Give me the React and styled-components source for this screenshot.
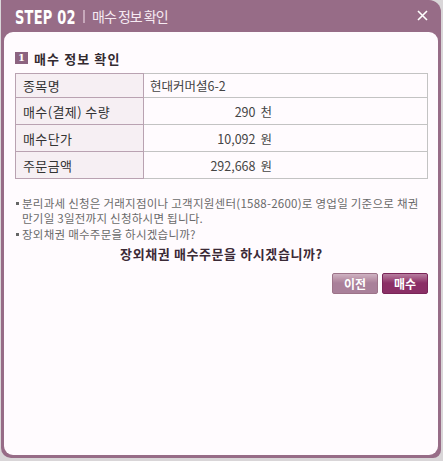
import React from 'react'
import styled, { createGlobalStyle } from 'styled-components'

const GlobalStyle = createGlobalStyle`
    html, body {
        margin: 0;
        padding: 0;
        background: #d9d6d8;
    }
    body {
        font-family: "Liberation Sans", "Noto Sans CJK KR", sans-serif;
        font-size: 12px;
    }
`;

const rows = [
    { label: '종목명', value: '현대커머셜6-2', height: 24 },
    { label: '매수(결제) 수량', value: '290', unit: '천', height: 27 },
    { label: '매수단가', value: '10,092', unit: '원', height: 27 },
    { label: '주문금액', value: '292,668', unit: '원', height: 27 },
]

function App() {
    return (
        <>
            <GlobalStyle />
            <Page>
                <Window>
                    <TitleBar>
                        <Step>STEP 02</Step>
                        <Divider />
                        <Title>매수 정보 확인</Title>
                        <Close aria-label="닫기">
                            <svg width="11" height="11" viewBox="0 0 11 11">
                                <path d="M1 1 L10 10 M10 1 L1 10" stroke="#fff" strokeWidth="1.6" />
                            </svg>
                        </Close>
                    </TitleBar>
                    <Body>
                        <SectionTitle>
                            <NumBadge>1</NumBadge>
                            매수 정보 확인
                        </SectionTitle>
                        <InfoTable>
                            <tbody>
                                {rows.map(row => (
                                    <tr key={row.label} style={{ height: row.height }}>
                                        <Th>{row.label}</Th>
                                        <Td>
                                            {row.unit ? (
                                                <Amount>
                                                    {row.value}<Unit>{row.unit}</Unit>
                                                </Amount>
                                            ) : row.value}
                                        </Td>
                                    </tr>
                                ))}
                            </tbody>
                        </InfoTable>
                        <Notes>
                            <li>분리과세 신청은 거래지점이나 고객지원센터(1588-2600)로 영업일 기준으로 채권 만기일 3일전까지 신청하시면 됩니다.</li>
                            <li>장외채권 매수주문을 하시겠습니까?</li>
                        </Notes>
                        <Question>장외채권 매수주문을 하시겠습니까?</Question>
                        <Buttons>
                            <Button>이전</Button>
                            <Button primary>매수</Button>
                        </Buttons>
                    </Body>
                </Window>
            </Page>
        </>
    )
}

const Page = styled.div`
    width: 443px;
    height: 461px;
    padding: 0 2px 3px 1px;
    box-sizing: border-box;
    display: flex;
`;

const Window = styled.div`
    flex: 1;
    display: flex;
    flex-direction: column;
    background: #976c87;
    border-radius: 0 12px 8px 10px;
    padding: 0 3px 3px 3px;
`;

const TitleBar = styled.div`
    height: 32px;
    display: flex;
    align-items: center;
    padding-left: 11px;
    padding-right: 10px;
    color: #fff;
`;

const Step = styled.span`
    display: inline-block;
    font-family: "DejaVu Sans Condensed", "DejaVu Sans", sans-serif;
    font-weight: bold;
    font-size: 19px;
    letter-spacing: 0.3px;
    margin-top: 1px;
    transform: scaleX(0.76);
    transform-origin: left center;
    margin-right: -19px;
`;

const Divider = styled.span`
    width: 2px;
    height: 13px;
    background: #c7a8bb;
    margin: 1px 7px 0 7px;
`;

const Title = styled.span`
    font-family: "Noto Sans CJK KR", sans-serif;
    font-size: 14px;
    color: #f6eaf2;
    letter-spacing: -1px;
    flex: 1;
`;

const Close = styled.button`
    border: 0;
    background: none;
    padding: 0;
    display: flex;
    cursor: pointer;
    margin-top: -2px;
`;

const Body = styled.div`
    flex: 1;
    background: #fffbfe;
    border-radius: 9px;
    padding: 18px 10px 0 11px;
`;

const SectionTitle = styled.div`
    display: flex;
    align-items: center;
    font-family: "Noto Sans CJK KR", sans-serif;
    font-weight: bold;
    font-size: 13px;
    color: #332a30;
    letter-spacing: 1.1px;
    height: 16px;
`;

const NumBadge = styled.span`
    width: 13px;
    height: 12px;
    background: #8c6380;
    color: #fff;
    font-family: "DejaVu Serif", serif;
    font-size: 10px;
    font-weight: bold;
    line-height: 12px;
    text-align: center;
    margin-right: 6px;
    letter-spacing: 0;
`;

const InfoTable = styled.table`
    width: 413px;
    margin-top: 7px;
    border-collapse: collapse;
    font-family: "Noto Sans CJK KR", sans-serif;
    font-size: 12.5px;
    color: #333;
`;

const Th = styled.th`
    width: 120px;
    background: #f6eff3;
    border: 1px solid #b9a2b1;
    font-weight: normal;
    font-size: 13px;
    letter-spacing: 0.4px;
    text-align: left;
    padding: 0 0 0 7px;
`;

const Td = styled.td`
    border: 1px solid #c3c3c3;
    padding: 0 0 0 6px;
    color: #444;
`;

const Amount = styled.span`
    display: block;
    width: 122px;
    text-align: right;
`;

const Unit = styled.span`
    margin-left: 5px;
`;

const Notes = styled.ul`
    list-style: none;
    margin: 17px 0 0;
    padding: 0;
    font-family: "Noto Sans CJK KR", sans-serif;
    font-size: 11.5px;
    color: #6a6a6a;
    line-height: 15px;
    letter-spacing: 0.25px;

    li {
        position: relative;
        padding-left: 7px;
    }
    li + li {
        margin-top: 1px;
    }
    li::before {
        content: '';
        position: absolute;
        left: 1px;
        top: 6px;
        width: 3px;
        height: 3px;
        background: #666;
    }
`;

const Question = styled.div`
    margin-top: 3px;
    line-height: 18px;
    text-align: center;
    font-family: "Noto Sans CJK KR", sans-serif;
    font-weight: bold;
    font-size: 13px;
    color: #3b2a36;
    letter-spacing: 0.6px;
`;

const Buttons = styled.div`
    display: flex;
    justify-content: flex-end;
    gap: 4px;
    margin-top: 10px;
`;

const Button = styled.button`
    width: 46px;
    height: 21px;
    border: 1px solid ${props => props.primary ? '#7a2558' : '#9d7389'};
    border-radius: 2px;
    background: ${props => props.primary
        ? 'linear-gradient(#b77ea0 0, #a0527f 5px, #8b2f66 9px, #8b2f66 100%)'
        : 'linear-gradient(#cfb3c3 0, #bb95aa 5px, #a9809a 9px, #a9809a 100%)'};
    color: #fff;
    font-family: "Noto Sans CJK KR", sans-serif;
    font-weight: bold;
    font-size: 12px;
    padding: 0;
    line-height: 19px;
    cursor: pointer;
`;

export default App
